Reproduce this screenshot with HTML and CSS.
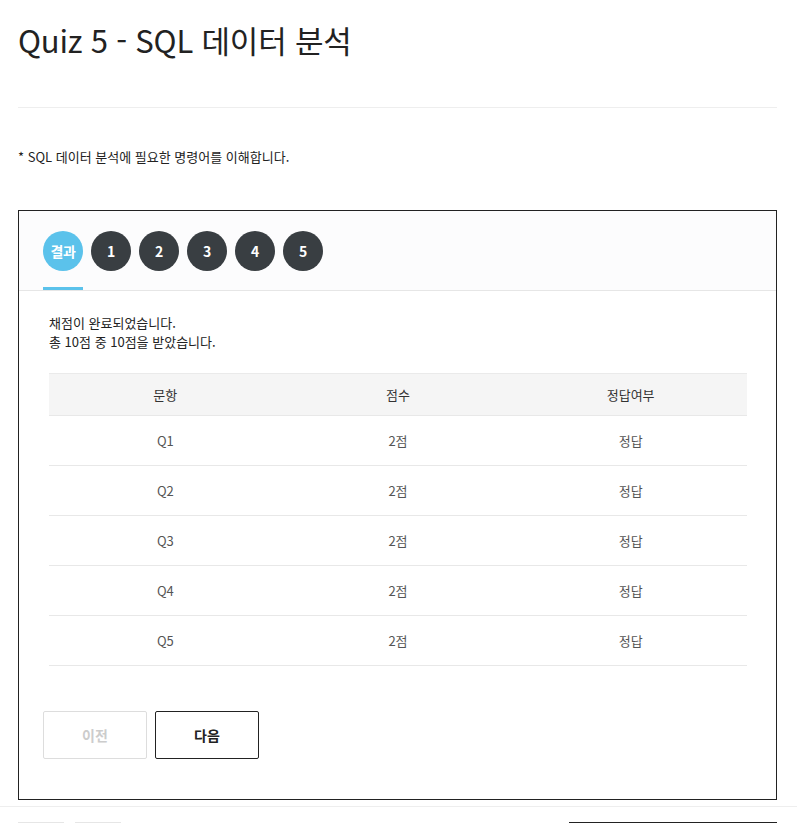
FILE: index.html
```html
<!DOCTYPE html>
<html lang="ko">
<head>
<meta charset="utf-8">
<link rel="stylesheet" href="styles.css">
</head>
<body>
<div class="page">
  <h1 class="title">Quiz 5 - SQL 데이터 분석</h1>
  <hr class="rule">
  <p class="desc">* SQL 데이터 분석에 필요한 명령어를 이해합니다.</p>
  <div class="quiz">
    <div class="tabs">
      <span class="tab active">결과</span>
      <span class="tab">1</span>
      <span class="tab">2</span>
      <span class="tab">3</span>
      <span class="tab">4</span>
      <span class="tab">5</span>
    </div>
    <div class="body">
      <div class="result">
        <span class="line">채점이 완료되었습니다.</span>
        <span class="line">총 10점 중 10점을 받았습니다.</span>
      </div>
      <table class="score">
        <thead>
          <tr><th>문항</th><th>점수</th><th>정답여부</th></tr>
        </thead>
        <tbody>
          <tr><td>Q1</td><td>2점</td><td>정답</td></tr>
          <tr><td>Q2</td><td>2점</td><td>정답</td></tr>
          <tr><td>Q3</td><td>2점</td><td>정답</td></tr>
          <tr><td>Q4</td><td>2점</td><td>정답</td></tr>
          <tr><td>Q5</td><td>2점</td><td>정답</td></tr>
        </tbody>
      </table>
    </div>
    <div class="nav">
      <button class="btn disabled">이전</button>
      <button class="btn">다음</button>
    </div>
  </div>
</div>
<div class="footer">
  <div class="foot-left">
    <span class="chip"></span>
    <span class="chip"></span>
  </div>
  <span class="foot-box"></span>
</div>
</body>
</html>
```

FILE: styles.css
```css
html, body {
  margin: 0;
  padding: 0;
  background: #fff;
  font-family: "Noto Sans CJK KR", "Noto Sans", sans-serif;
  color: #222;
}
.page {
  padding: 0 20px 0 18px;
}
.title {
  margin: 0;
  padding-top: 18px;
  font-size: 31px;
  font-weight: 400;
  line-height: 44px;
  letter-spacing: -0.2px;
  color: #222;
}
.rule {
  margin: 45px 0 0;
  border: 0;
  border-top: 1px solid #eee;
  height: 0;
}
.desc {
  margin: 39px 0 0;
  font-size: 13px;
  line-height: 20px;
  color: #222;
}
.quiz {
  margin-top: 43px;
  border: 1px solid #222;
  height: 590px;
  box-sizing: border-box;
  display: flex;
  flex-direction: column;
}
.tabs {
  display: flex;
  gap: 8px;
  padding: 20px 24px 0;
  height: 59px;
  background: #fcfcfd;
  border-bottom: 1px solid #e6e6e6;
}
.tab {
  position: relative;
  width: 40px;
  height: 40px;
  border-radius: 50%;
  background: #393e42;
  color: #fff;
  font-size: 14px;
  font-weight: 700;
  display: flex;
  align-items: center;
  justify-content: center;
  letter-spacing: -0.5px;
}
.tab.active {
  background: #5bc2eb;
}
.tab.active::after {
  content: "";
  position: absolute;
  left: 0;
  right: 0;
  top: 56px;
  height: 3px;
  background: #5bc2eb;
}
.body {
  padding: 22px 29px 0 30px;
}
.result {
  font-size: 13px;
  color: #222;
}
.line {
  display: block;
  height: 19px;
  line-height: 19px;
}
.score {
  margin-top: 22px;
  width: 100%;
  border-collapse: collapse;
  table-layout: fixed;
  font-size: 13px;
}
.score th {
  height: 41px;
  background: #f5f5f5;
  border-top: 1px solid #eaeaea;
  border-bottom: 1px solid #e8e8e8;
  font-weight: 400;
  color: #333;
  padding: 0;
}
.score td {
  height: 49px;
  border-bottom: 1px solid #e8e8e8;
  text-align: center;
  color: #555;
  padding: 0;
}
.nav {
  display: flex;
  gap: 8px;
  padding: 45px 24px 0;
}
.btn {
  width: 104px;
  height: 48px;
  background: #fff;
  border: 1px solid #222;
  border-radius: 2px;
  font-family: inherit;
  font-size: 14px;
  font-weight: 700;
  color: #222;
  padding: 0;
}
.btn.disabled {
  border-color: #ddd;
  color: #ccc;
}
.footer {
  margin-top: 6px;
  border-top: 1px solid #eee;
  padding: 15px 20px 0 18px;
  display: flex;
  justify-content: space-between;
}
.foot-left {
  display: flex;
  gap: 11px;
}
.chip {
  width: 46px;
  height: 10px;
  border-top: 1px solid #e6e6e6;
}
.foot-box {
  width: 208px;
  height: 10px;
  border-top: 2px solid #222;
}
```
